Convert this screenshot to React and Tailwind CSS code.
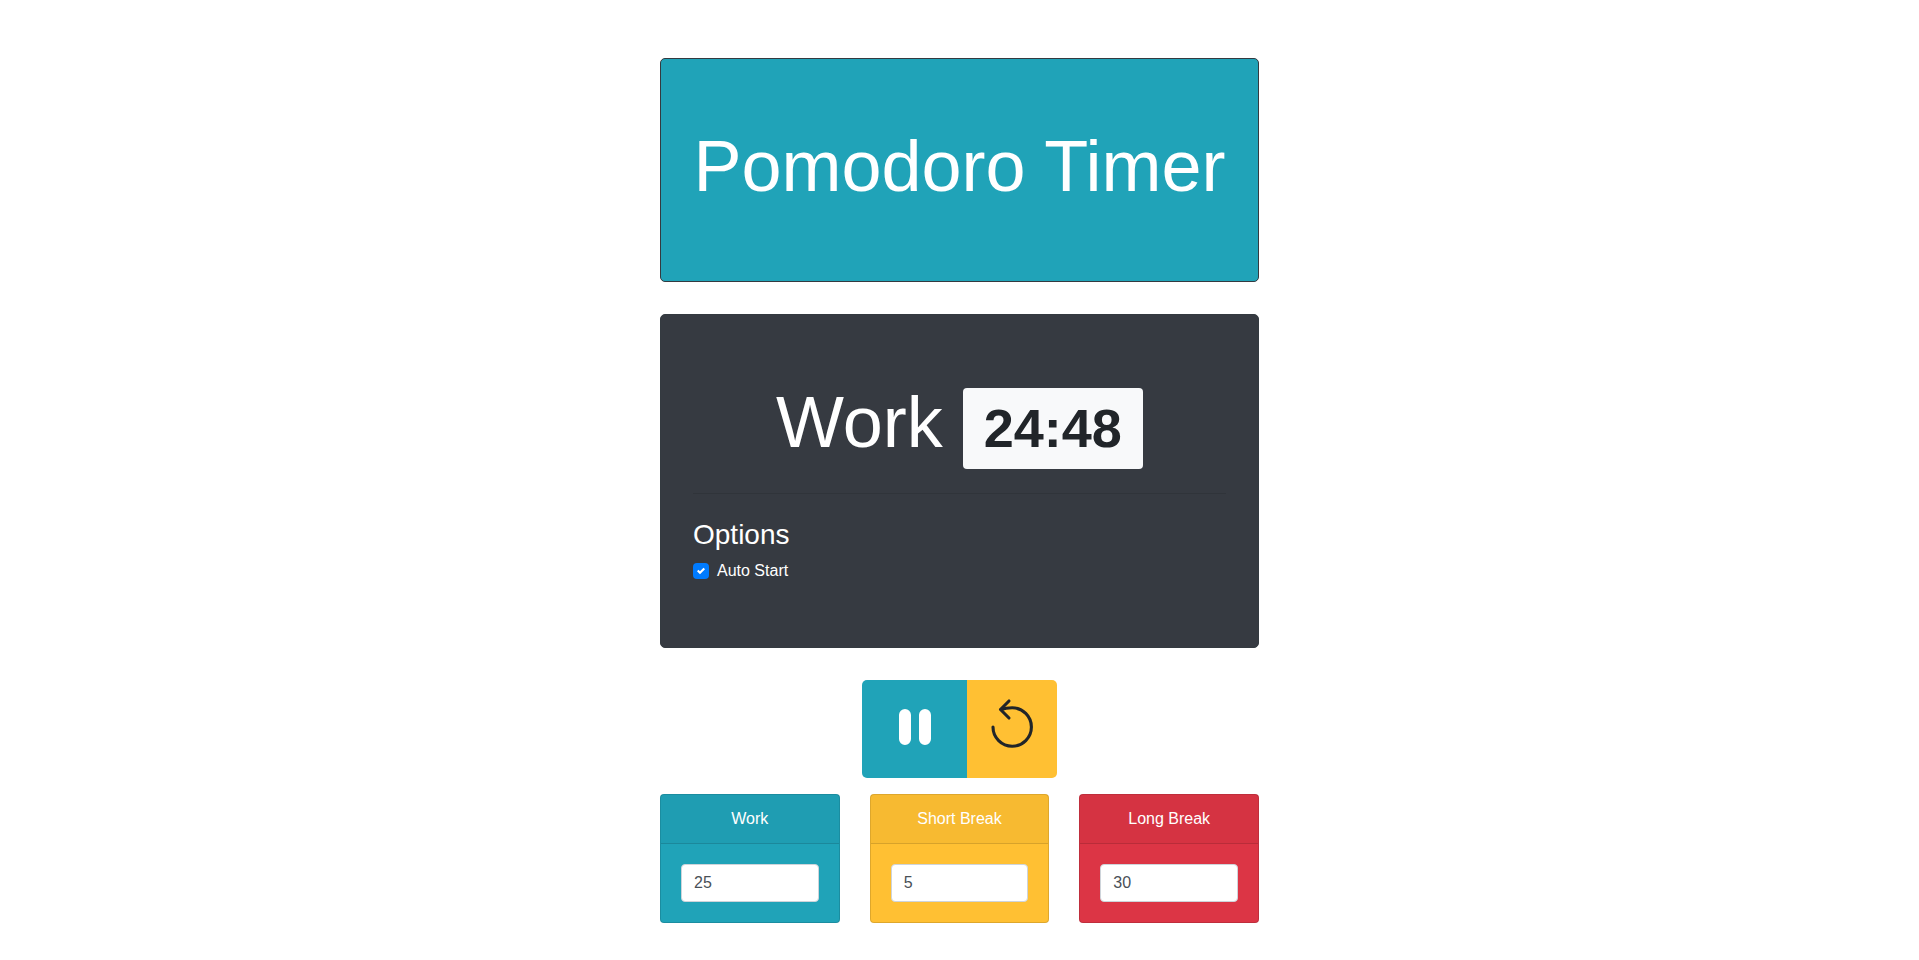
const durations = [
  { id: "work", label: "Work", value: 25, color: "bg-[#20a3b8]" },
  { id: "short", label: "Short Break", value: 5, color: "bg-[#ffc033]" },
  { id: "long", label: "Long Break", value: 30, color: "bg-[#dc3545]" },
];

function PauseIcon() {
  return (
    <svg className="size-16" viewBox="0 0 16 16" fill="currentColor" aria-hidden="true">
      <path d="M5.5 3.5A1.5 1.5 0 0 1 7 5v6a1.5 1.5 0 0 1-3 0V5a1.5 1.5 0 0 1 1.5-1.5zm5 0A1.5 1.5 0 0 1 12 5v6a1.5 1.5 0 0 1-3 0V5a1.5 1.5 0 0 1 1.5-1.5z" />
    </svg>
  );
}

function ResetIcon() {
  return (
    <svg className="h-16 w-12" viewBox="0 0 48 64" fill="none" stroke="currentColor" strokeWidth="3.1" strokeLinecap="round" strokeLinejoin="round" aria-hidden="true">
      <path d="M5 32A19.200 19.200 0 1 0 24.200 12.800Q18 12.800 13 14.500" />
      <path d="M21 6L12.500 14.500L21 23" />
    </svg>
  );
}

export default function App() {
  return (
    <main className="mx-auto flex w-full max-w-[599px] flex-col pt-[58px] pb-9 font-['Liberation_Sans',Arial,sans-serif] text-base text-[#212529]">
      <header className="mb-8 rounded-[5px] border border-[#343a40] bg-[#20a3b8] px-8 pt-16 pb-18 text-center text-white">
        <h1 className="text-7xl leading-[86px] whitespace-nowrap">Pomodoro Timer</h1>
      </header>

      <section className="mb-8 rounded-[5px] border border-[#343a40] bg-[#363a41] px-8 py-16 text-white">
        <h2 className="text-center text-7xl leading-[86px]">
          Work{" "}
          <span className="inline-block rounded-[4px] bg-[#f8f9fa] px-[21px] pt-[13px] pb-[14px] align-baseline text-[54px] leading-[54px] font-bold text-[#212529]">
            24:48
          </span>
        </h2>
        <hr className="my-6 border-t border-black/10" />
        <h3 className="mb-2 text-[28px] leading-[33px]">Options</h3>
        <label className="flex h-6 items-center gap-2">
          <span className="grid">
            <input type="checkbox" defaultChecked className="col-start-1 row-start-1 size-4 appearance-none rounded-[4px] bg-white checked:bg-[#007bff]" />
            <svg className="pointer-events-none col-start-1 row-start-1 size-2 place-self-center" viewBox="0 0 8 8" aria-hidden="true">
              <path fill="#fff" d="M6.564.75l-3.59 3.612-1.538-1.55L0 4.26 2.974 7.25 8 2.193z" />
            </svg>
          </span>
          Auto Start
        </label>
      </section>

      <div className="mb-4 flex justify-center">
        <button type="button" aria-label="Pause" className="flex h-[98px] items-start rounded-l-[5px] bg-[#20a3b8] pr-5 pl-[21px] pt-[15px] text-white">
          <PauseIcon />
        </button>
        <button type="button" aria-label="Reset" className="flex h-[98px] items-start rounded-r-[5px] bg-[#ffc033] px-[21px] pt-[15px]">
          <ResetIcon />
        </button>
      </div>

      <div className="grid grid-cols-3 gap-[30px]">
        {durations.map((d) => (
          <div key={d.id} className={"rounded-[4px] border border-black/13 " + d.color}>
            <label htmlFor={d.id} className="block border-b border-black/13 bg-black/3 py-3 text-center leading-6 text-white">
              {d.label}
            </label>
            <div className="p-5">
              <input id={d.id} type="text" inputMode="numeric" defaultValue={d.value} className="block h-[38px] w-full rounded-[4px] border border-[#ced4da] bg-white px-3 text-[#495057]" />
            </div>
          </div>
        ))}
      </div>
    </main>
  );
}
